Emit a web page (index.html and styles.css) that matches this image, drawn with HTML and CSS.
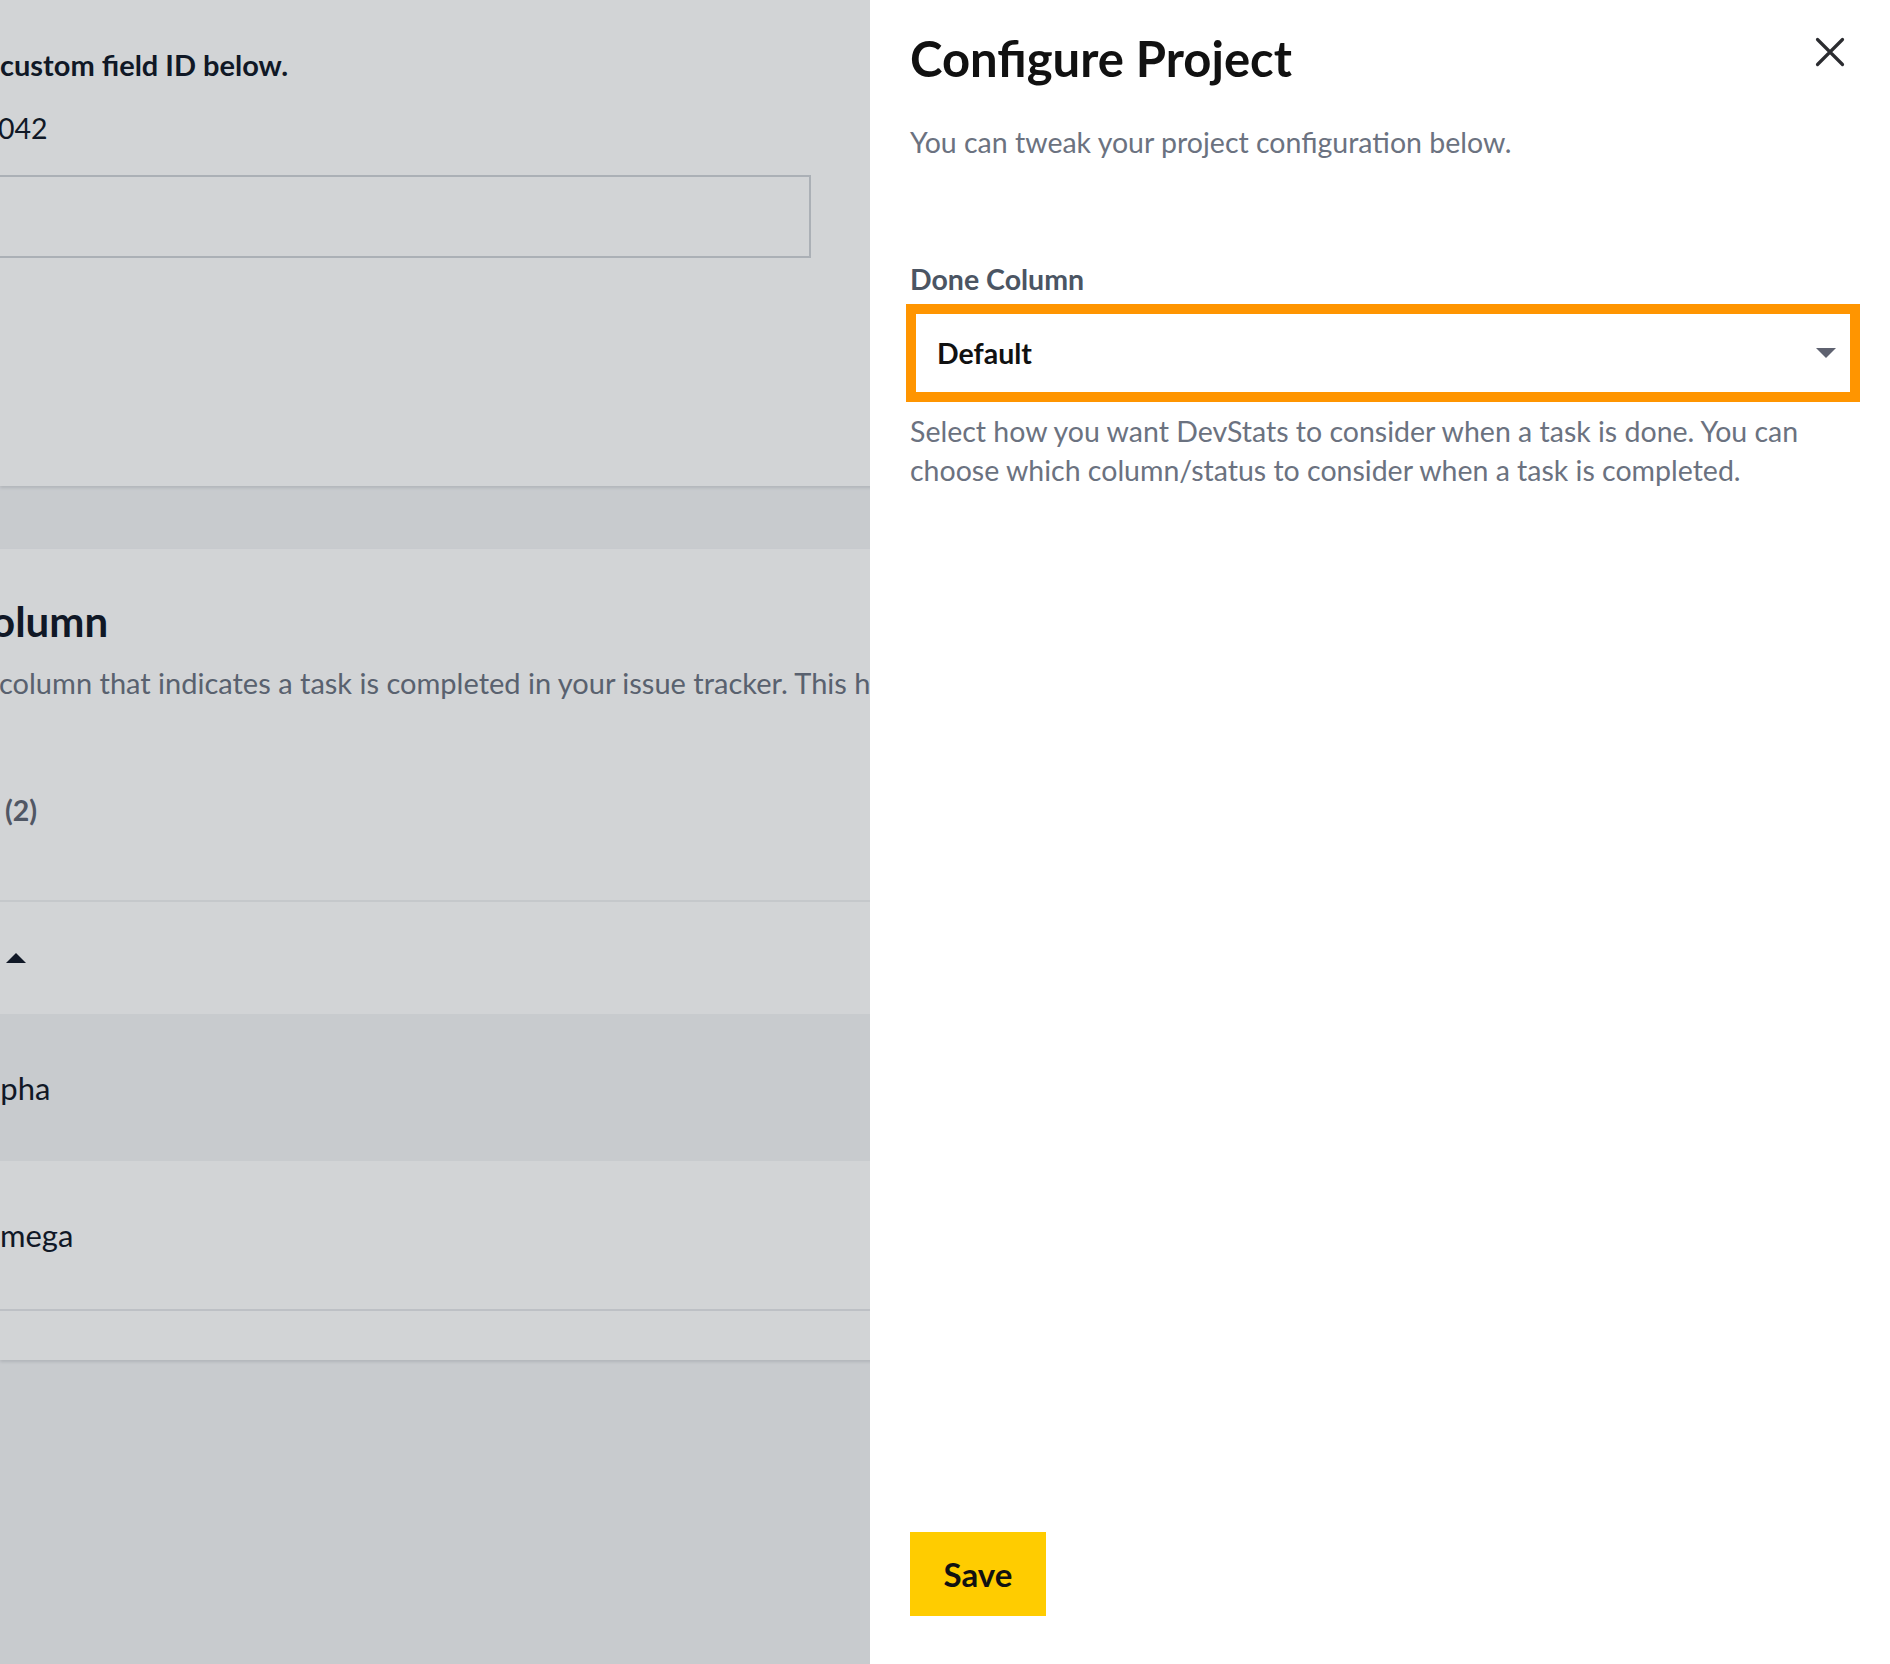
FILE: index.html
```html
<!DOCTYPE html>
<html lang="en">
<head>
<meta charset="utf-8">
<title>DevStats – Project settings</title>
<link rel="stylesheet" href="styles.css">
</head>
<body>
  <main class="page">
    <section class="panel panel-field">
      <p class="field-hint">custom field ID below.</p>
      <p class="field-value">042</p>
      <div class="text-input"></div>
    </section>

    <section class="panel panel-columns">
      <h2 class="columns-title">olumn</h2>
      <p class="columns-desc">column that indicates a task is completed in your issue tracker. This helps us measure how long tasks take to finish.</p>
      <div class="columns-count">(2)</div>
      <div class="table">
        <div class="table-head"><span class="sort-up"></span></div>
        <div class="table-row is-hover"><span class="cell-name cell-alpha">lpha</span></div>
        <div class="table-row"><span class="cell-name">mega</span></div>
      </div>
      <div class="panel-foot"></div>
    </section>
  </main>

  <div class="overlay"></div>

  <aside class="drawer">
    <header class="drawer-head">
      <h1 class="drawer-title">Configure Project</h1>
      <button class="drawer-close" type="button" aria-label="Close">
        <svg viewBox="0 0 30 30" width="30" height="30" aria-hidden="true">
          <path d="M2.5 2.5 L27.5 27.5 M27.5 2.5 L2.5 27.5" stroke="#2b2c30" stroke-width="3.2" stroke-linecap="round" fill="none"/>
        </svg>
      </button>
    </header>
    <p class="drawer-sub">You can tweak your project configuration below.</p>

    <div class="form-field">
      <label class="field-label">Done Column</label>
      <div class="select">
        <span class="select-value">Default</span>
        <span class="select-caret"></span>
      </div>
      <p class="field-help">Select how you want DevStats to consider when a task is done. You can choose which column/status to consider when a task is completed.</p>
    </div>

    <footer class="drawer-foot">
      <button class="btn-save" type="button">Save</button>
    </footer>
  </aside>
</body>
</html>
```

FILE: styles.css
```css
* { box-sizing: border-box; }

html, body {
  margin: 0;
  height: 100%;
}

body {
  font-family: "Lato", "Noto Sans", "Liberation Sans", sans-serif;
  background: #f3f4f6;
  color: #111827;
  overflow: hidden;
}

p { margin: 0; }

/* ---------- page behind the drawer ---------- */
.page {
  display: flex;
  flex-direction: column;
  gap: 63px;
}

.panel {
  background: #ffffff;
  box-shadow: 0 2px 3px rgba(17, 24, 39, 0.12);
}

.panel-field {
  height: 486px;
  padding-top: 49px;
}

.field-hint {
  font-size: 29px;
  font-weight: 700;
  line-height: 32px;
  color: #111827;
}

.field-value {
  margin-top: 31px;
  margin-left: -2px;
  font-size: 28.5px;
  line-height: 32px;
  color: #111827;
}

.text-input {
  margin-top: 31px;
  margin-left: -10px;
  width: 821px;
  height: 83px;
  border: 2px solid #cfd3d8;
  background: #ffffff;
}

.panel-columns {
  height: 811px;
  padding-top: 50px;
  display: flex;
  flex-direction: column;
}

.columns-title {
  margin: 0 0 0 -9px;
  font-size: 42px;
  font-weight: 700;
  line-height: 44px;
  color: #111827;
}

.columns-desc {
  margin-top: 24px;
  margin-left: -1px;
  font-size: 29px;
  line-height: 32px;
  color: #6b7280;
  white-space: nowrap;
}

.columns-count {
  margin-top: 95px;
  padding-left: 5px;
  font-size: 28.5px;
  font-weight: 700;
  line-height: 32px;
  color: #5f6573;
}

.table {
  margin-top: 74px;
  border-top: 2px solid #eff0f2;
  border-bottom: 2px solid #e5e7eb;
}

.table-head {
  height: 112px;
  display: flex;
  align-items: center;
  padding-left: 6px;
}

.sort-up {
  width: 0;
  height: 0;
  border-left: 10px solid transparent;
  border-right: 10px solid transparent;
  border-bottom: 10px solid #111827;
}

.table-row {
  height: 148px;
  display: flex;
  align-items: center;
  font-size: 31px;
  color: #111827;
}

.table-row.is-hover {
  background: #f3f4f6;
  height: 147px;
}

.cell-alpha { margin-left: -7px; }

.panel-foot { flex: 1; }

/* ---------- dimming layer ---------- */
.overlay {
  position: fixed;
  inset: 0;
  background: rgba(17, 24, 39, 0.19);
}

/* ---------- drawer ---------- */
.drawer {
  position: fixed;
  top: 0;
  right: 0;
  bottom: 0;
  width: 1020px;
  background: #ffffff;
  display: flex;
  flex-direction: column;
  padding: 34px 34px 48px 40px;
}

.drawer-head {
  display: flex;
  align-items: flex-start;
  justify-content: space-between;
}

.drawer-title {
  margin: 0;
  font-size: 49px;
  font-weight: 700;
  line-height: 48px;
  color: #111111;
}

.drawer-close {
  margin: 3px 11px 0 0;
  padding: 0;
  border: 0;
  background: none;
  width: 30px;
  height: 30px;
  cursor: pointer;
}

.drawer-close svg { display: block; }

.drawer-sub {
  margin-top: 44px;
  font-size: 28.5px;
  line-height: 32px;
  color: #6b7280;
}

.form-field {
  margin-top: 105px;
}

.field-label {
  display: block;
  font-size: 28.5px;
  font-weight: 700;
  line-height: 32px;
  color: #4b5563;
}

.select {
  margin: 9px -4px 0 -4px;
  height: 98px;
  border: 10px solid #ff9500;
  display: flex;
  align-items: center;
  justify-content: space-between;
  padding: 0 14px 0 21px;
}

.select-value {
  font-size: 28.5px;
  font-weight: 700;
  color: #111111;
}

.select-caret {
  width: 0;
  height: 0;
  border-left: 10px solid transparent;
  border-right: 10px solid transparent;
  border-top: 10px solid #5f6270;
}

.field-help {
  margin-top: 10px;
  font-size: 28.5px;
  line-height: 39px;
  color: #6b7280;
}

.drawer-foot {
  margin-top: auto;
}

.btn-save {
  width: 136px;
  height: 84px;
  border: 0;
  background: #ffcc00;
  font-family: inherit;
  font-size: 33px;
  font-weight: 700;
  color: #111111;
  cursor: pointer;
}
```
